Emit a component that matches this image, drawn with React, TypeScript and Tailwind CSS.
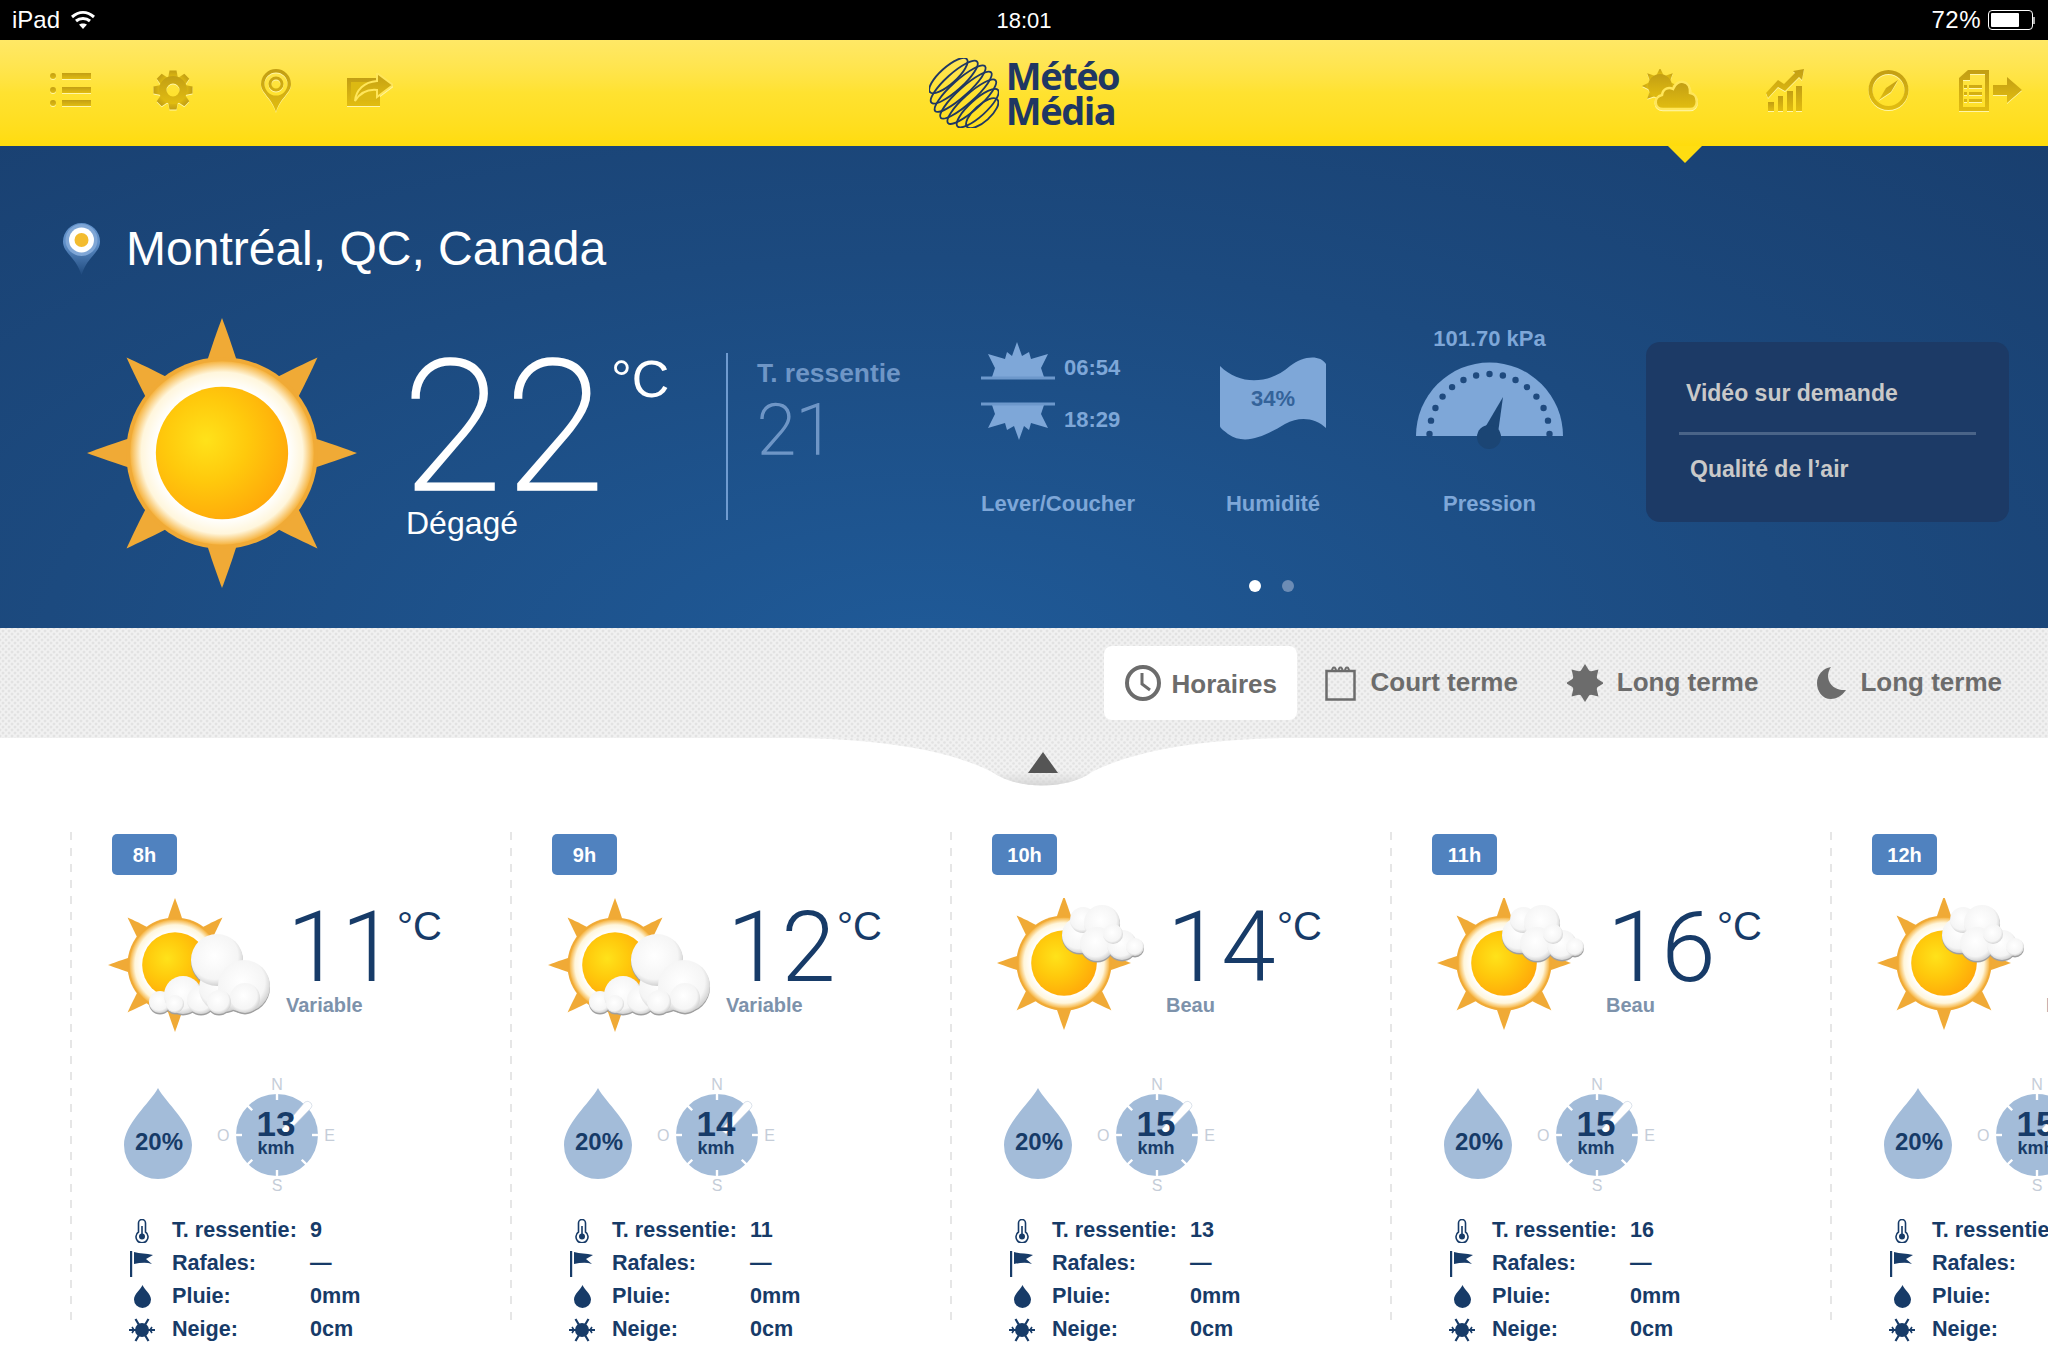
import React from "react";

function HeaderIcon({ w, h, vb, children, className = "" }: { w: number; h: number; vb: string; children: React.ReactNode; className?: string }) {
  return (
    <svg width={w} height={h} viewBox={vb} className={"drop-shadow-[0_1.5px_0_#fff6a8] " + className} fill="url(#gold)">
      {children}
    </svg>
  );
}

function SunBody({ cx, cy, scale, id }: { cx: number; cy: number; scale: number; id: string }) {
  return (
    <g transform={`translate(${cx} ${cy}) scale(${scale})`}>
      <defs>
        <radialGradient id={id + "d"} cx="38%" cy="40%" r="70%">
          <stop offset="0%" stopColor="#ffe21a" />
          <stop offset="45%" stopColor="#ffc90c" />
          <stop offset="100%" stopColor="#ffa40a" />
        </radialGradient>
        <radialGradient id={id + "r"} cx="50%" cy="50%" r="50%">
          <stop offset="72%" stopColor="#ffffff" />
          <stop offset="88%" stopColor="#fff6dc" />
          <stop offset="100%" stopColor="#f6b441" />
        </radialGradient>
      </defs>
      {[0, 45, 90, 135, 180, 225, 270, 315].map((a) => (
        <path key={a} transform={`rotate(${a})`} d="M-13 -62 C-8 -78 -3 -92 0 -100 C3 -92 8 -78 13 -62 Z" fill="#f0aa36" />
      ))}
      <circle r="71" fill="#f0aa36" />
      <circle r="68" fill={`url(#${id}r)`} />
      <circle r="49" fill={`url(#${id}d)`} />
    </g>
  );
}

function Puffs({ circles, id }: { circles: number[][]; id: string }) {
  return (
    <g>
      <defs>
        <radialGradient id={id} cx="45%" cy="42%" r="58%">
          <stop offset="0%" stopColor="#ffffff" />
          <stop offset="78%" stopColor="#f5f5f5" />
          <stop offset="100%" stopColor="#d2d2d2" />
        </radialGradient>
      </defs>
      {circles.map(([x, y, r], i) => (
        <circle key={"s" + i} cx={x} cy={y + 1.5} r={r} fill="#9f9f9f" />
      ))}
      {circles.map(([x, y, r], i) => (
        <circle key={i} cx={x} cy={y} r={r} fill={`url(#${id})`} />
      ))}
    </g>
  );
}

function WeatherIcon({ kind, id }: { kind: "variable" | "beau"; id: string }) {
  return (
    <svg width="188" height="140" viewBox="0 0 188 140" className="shrink-0">
      {kind === "variable" ? (
        <>
          <SunBody cx={68} cy={67} scale={0.67} id={id} />
          <Puffs
            id={id + "c"}
            circles={[
              [53, 104, 11],
              [76, 97, 19],
              [94, 102, 14],
              [116, 90, 24],
              [110, 62, 26],
              [137, 88, 26],
              [138, 100, 15],
              [112, 104, 12],
              [68, 106, 9],
            ]}
          />
        </>
      ) : (
        <>
          <SunBody cx={77} cy={65} scale={0.67} id={id} />
          <Puffs
            id={id + "c"}
            circles={[
              [93, 37, 18],
              [96, 22, 13],
              [115, 25, 18],
              [110, 46, 17],
              [135, 47, 15],
              [148, 49, 9],
              [126, 36, 10],
            ]}
          />
        </>
      )}
    </svg>
  );
}

function Drop() {
  return (
    <svg width="68" height="91" viewBox="0 0 68 91" className="absolute inset-0">
      <path d="M34 0C42 15 68 36 68 57A34 34 0 0 1 0 57C0 36 26 15 34 0Z" fill="#a3bcd9" />
    </svg>
  );
}

function WindDial() {
  const ticks = [0, 45, 90, 135, 180, 225, 270, 315];
  return (
    <svg width="82" height="82" viewBox="-41 -41 82 82" className="absolute inset-0">
      <circle r="41" fill="#a3bcd9" />
      {ticks.map((a) => (
        <rect key={a} x="-1.2" y="-42" width="2.4" height="7" fill="#fff" transform={`rotate(${a})`} />
      ))}
      <path d="M4 -5L28 -33Q31 -35 34 -32Q36 -29 34 -27L9 -1Z" fill="#fff" stroke="#c3cfdd" strokeWidth="0.6" />
    </svg>
  );
}

function Thermo() {
  return (
    <svg width="16" height="24" viewBox="0 0 16 24" fill="none" stroke="#173b68" strokeWidth="1.6">
      <path d="M4.5 13V4a3.5 3.5 0 0 1 7 0v9a6 6 0 1 1-7 0Z" />
      <circle cx="8" cy="17.5" r="3" fill="#173b68" stroke="none" />
      <rect x="7.2" y="7" width="1.6" height="9" fill="#173b68" stroke="none" />
    </svg>
  );
}
function FlagI() {
  return (
    <svg width="24" height="26" viewBox="0 0 24 26" fill="#173b68">
      <rect x="0" y="0" width="2.2" height="26" />
      <path d="M4 1C10 3 16 2 23 4L16 8L22 13C16 11 10 12 4 13Z" />
    </svg>
  );
}
function DropI() {
  return (
    <svg width="17" height="23" viewBox="0 0 17 23" fill="#173b68">
      <path d="M8.5 0C10 4 17 9 17 14.5A8.5 8.5 0 0 1 0 14.5C0 9 7 4 8.5 0Z" />
    </svg>
  );
}
function Snow() {
  return (
    <svg width="26" height="24" viewBox="-13 -12 26 24" stroke="#173b68" strokeWidth="2.2" fill="#173b68">
      <circle r="7" stroke="none" />
      <path d="M-13 0H13M-6.5 -11L6.5 11M6.5 -11L-6.5 11" />
      <path d="M-10 -3L-8 0L-10 3M10 -3L8 0L10 3" fill="none" strokeWidth="1.6" />
    </svg>
  );
}

const cards = [
  { h: "8h", t: "11", d: "Variable", k: "variable" as const, w: "13", f: "9" },
  { h: "9h", t: "12", d: "Variable", k: "variable" as const, w: "14", f: "11" },
  { h: "10h", t: "14", d: "Beau", k: "beau" as const, w: "15", f: "13" },
  { h: "11h", t: "16", d: "Beau", k: "beau" as const, w: "15", f: "16" },
  { h: "12h", t: "17", d: "Beau", k: "beau" as const, w: "15", f: "17" },
];

function Card({ c, i }: { c: (typeof cards)[number]; i: number }) {
  return (
    <div className="relative w-[440px] shrink-0 pt-[2px] text-[#173b68]">
      <div className="absolute -left-[1px] top-0 h-[490px] w-[2px] bg-[repeating-linear-gradient(to_bottom,#e6e6e6_0,#e6e6e6_8px,transparent_8px,transparent_16px)]" />
      <div className="ml-[41px] flex h-[41px] w-[65px] items-center justify-center rounded-[5px] bg-[#5082bf] text-[20px] font-bold text-white">{c.h}</div>
      <div className="mt-[23px] flex h-[140px] pl-[36px]">
        <WeatherIcon kind={c.k} id={"w" + i} />
        <div className="flex flex-col">
          <div className="mt-[15px] flex items-start">
            <span className="-ml-[8px] w-[110px] font-['Roboto',sans-serif] text-[98px] font-light leading-[70px]">{c.t}</span>
            <span className="-mt-[3px] text-[40px] leading-[32px]">°C</span>
          </div>
          <span className="-ml-[9px] mt-[10px] text-[20px] font-bold leading-[24px] text-[#7d92ab]">{c.d}</span>
        </div>
      </div>
      <div className="mt-[40px] flex h-[136px] pl-[53px]">
        <div className="relative mt-[10px] flex h-[91px] w-[68px] items-center justify-center">
          <Drop />
          <span className="relative ml-[2px] mt-[16px] text-[24px] font-bold">20%</span>
        </div>
        <div className="relative ml-[44px] mt-[16px] h-[82px] w-[82px]">
          <WindDial />
          <span className="absolute -top-[18px] left-0 w-full text-center text-[16px] leading-[18px] text-[#c5cdd8]">N</span>
          <span className="absolute -bottom-[19px] left-0 w-full text-center text-[16px] leading-[18px] text-[#c5cdd8]">S</span>
          <span className="absolute -left-[19px] top-[33px] text-[16px] leading-[18px] text-[#c5cdd8]">O</span>
          <span className="absolute -right-[17px] top-[33px] text-[16px] leading-[18px] text-[#c5cdd8]">E</span>
          <div className="relative flex h-full flex-col items-center pt-[14px]">
            <span className="-ml-[2px] text-[35px] font-bold leading-[32px]">{c.w}</span>
            <span className="-ml-[2px] -mt-[2px] text-[18px] font-bold leading-[20px]">kmh</span>
          </div>
        </div>
      </div>
      <div className="flex flex-col">
        {[
          [<Thermo key="a" />, "T. ressentie:", c.f],
          [<FlagI key="b" />, "Rafales:", "—"],
          [<DropI key="c" />, "Pluie:", "0mm"],
          [<Snow key="d" />, "Neige:", "0cm"],
        ].map(([icon, label, value], n) => (
          <div key={n} className="flex h-[33px] items-center pl-[51px] text-[21.6px] font-bold">
            <span className="flex w-[40px] justify-center">{icon}</span>
            <span className="ml-[10px] w-[138px] whitespace-nowrap">{label}</span>
            <span className="whitespace-nowrap">{value}</span>
          </div>
        ))}
      </div>
    </div>
  );
}

function Gauge() {
  const dots = Array.from({ length: 15 }, (_, i) => {
    const a = Math.PI - (i * Math.PI) / 14;
    return [73.5 + 60 * Math.cos(a), 73 - 60 * Math.sin(a)];
  });
  return (
    <svg width="147" height="90" viewBox="0 0 147 90">
      <path d="M0 75A73.5 73.5 0 0 1 147 75Z" fill="#7ea7d8" />
      {dots.map(([x, y], i) => (
        <circle key={i} cx={x} cy={y} r="3.2" fill="#1f4a7e" />
      ))}
      <path d="M67 70L87 36L82 72Z" fill="#1b4574" />
      <circle cx="73" cy="76" r="12" fill="#1b4574" />
    </svg>
  );
}

function Rise({ flip = false }: { flip?: boolean }) {
  return (
    <svg width="74" height="38" viewBox="0 0 74 38" fill="#7ea7d8" className={flip ? "rotate-180" : ""}>
      <path d="M36 0L41 14L48 10L50 17L67 12L60 26L63 35H11L14 26L7 12L24 17L26 10L31 14Z" />
      <rect x="0" y="34.500" width="74" height="3" fill="#6d98cb" />
    </svg>
  );
}

function TabText({ children }: { children: React.ReactNode }) {
  return <span className="text-[26px] font-bold leading-none text-[#6c6c6c]">{children}</span>;
}

export default function App() {
  return (
    <div className="relative h-[1352px] w-[2048px] overflow-hidden bg-white font-['Liberation_Sans',Arial,sans-serif]">
      <svg width="0" height="0" className="absolute">
        <defs>
          <linearGradient id="gold" x1="0" y1="0" x2="0" y2="1">
            <stop offset="0%" stopColor="#c29e14" />
            <stop offset="100%" stopColor="#e2bd10" />
          </linearGradient>
        </defs>
      </svg>

      {/* status bar */}
      <div className="grid h-[40px] grid-cols-3 items-center bg-black px-[12px] text-[24px] text-white">
        <div className="flex items-center gap-[10px]">
          <span>iPad</span>
          <svg width="26" height="20" viewBox="0 0 26 20" fill="none" stroke="#fff" strokeWidth="3">
            <path d="M2 7C9 1 17 1 24 7M6 11C10 7.500 16 7.500 20 11" />
            <path d="M13 19L9 14.500C11 13 15 13 17 14.500Z" fill="#fff" stroke="none" />
          </svg>
        </div>
        <div className="text-center text-[22px]">18:01</div>
        <div className="flex items-center justify-end gap-[7px] pr-[1px]">
          <span className="tracking-[0.5px]">72%</span>
          <div className="flex items-center">
            <div className="h-[20px] w-[45px] rounded-[4px] border border-white p-[2px]">
              <div className="h-full w-[72%] rounded-[1px] bg-white" />
            </div>
            <div className="h-[7px] w-[2px] bg-[#aaa]" />
          </div>
        </div>
      </div>

      {/* header */}
      <div className="relative grid h-[106px] grid-cols-3 items-center bg-gradient-to-b from-[#ffe866] via-[#ffe230] to-[#ffdc0c]">
        <div className="flex items-center pb-[6px] pl-[50px]">
          <HeaderIcon w={41} h={36} vb="0 0 41 36">
            <circle cx="3" cy="4" r="3" />
            <circle cx="3" cy="18" r="3" />
            <circle cx="3" cy="31" r="3" />
            <rect x="12" y="1" width="29" height="6" />
            <rect x="12" y="15" width="29" height="6" />
            <rect x="12" y="28" width="29" height="6" />
          </HeaderIcon>
          <HeaderIcon w={40} h={40} vb="-20 -20 40 40" className="ml-[62px]">
            {[0, 45, 90, 135, 180, 225, 270, 315].map((a) => (
              <path key={a} transform={`rotate(${a})`} d="M-5 -12L-3.500 -19.500H3.500L5 -12Z" />
            ))}
            <path fillRule="evenodd" d="M0 -14A14 14 0 1 1 0 14A14 14 0 1 1 0 -14ZM0 -6.500A6.500 6.500 0 1 0 0 6.500A6.500 6.500 0 1 0 0 -6.500Z" />
          </HeaderIcon>
          <HeaderIcon w={30} h={43} vb="0 0 30 43" className="ml-[68px]">
            <path fillRule="evenodd" d="M15 0A15 15 0 0 1 30 15C30 24 19 29 15 43C11 29 0 24 0 15A15 15 0 0 1 15 0ZM15 3.500A11.500 11.500 0 1 0 15 26.500A11.500 11.500 0 1 0 15 3.500ZM15 7.500A7.500 7.500 0 1 1 15 22.500A7.500 7.500 0 1 1 15 7.500ZM15 10.500A4.500 4.500 0 1 0 15 19.500A4.500 4.500 0 1 0 15 10.500Z" />
          </HeaderIcon>
          <HeaderIcon w={46} h={34} vb="0 0 46 34" className="ml-[56px]">
            <path fillRule="evenodd" d="M0 5H33V33H0ZM4 9V27H29V9Z" />
            <rect x="4" y="9" width="25" height="18" fill="#dcb912" />
            <path d="M30 0L46 12L30 24V17C20 16 13 20 8 28C9 17 17 9 30 8Z" stroke="#ffe65a" strokeWidth="2" />
          </HeaderIcon>
        </div>
        <div className="flex items-center justify-center">
          <svg width="70" height="70" viewBox="-36 -36 72 72" fill="none" stroke="#1f3763" strokeWidth="1.900">
            {[-24, -15, -6, 3, 12, 21, 28].map((d) => (
              <ellipse key={d} cx="0" cy={d} rx={Math.sqrt(1225 - d * d)} ry="8.500" transform="rotate(-42)" />
            ))}
          </svg>
          <div className="ml-[7px] flex flex-col font-['Open_Sans',sans-serif] text-[38px] font-bold leading-[35px] tracking-[-1.5px] text-[#1f3763]">
            <span>Météo</span>
            <span>Média</span>
          </div>
        </div>
        <div className="flex items-center justify-end pb-[6px] pr-[26px]">
          <HeaderIcon w={56} h={42} vb="0 0 56 42">
            <g>
              {[0, 45, 90, 135, 180, 225, 270, 315].map((a) => (
                <path key={a} transform={`translate(18 17) rotate(${a})`} d="M-3.500 -11L0 -18L3.500 -11Z" />
              ))}
              <circle cx="18" cy="17" r="12" />
            </g>
            <path d="M21 40C12 40 11 28 20 26C21 19 27 18 31 20C35 9 49 11 48 24C57 25 57 40 48 40Z" stroke="#ffe65a" strokeWidth="2.500" />
          </HeaderIcon>
          <HeaderIcon w={40} h={42} vb="0 0 40 42" className="ml-[68px]">
            <rect x="2" y="33" width="6" height="9" />
            <rect x="12" y="27" width="5" height="15" />
            <rect x="21" y="22" width="6" height="20" />
            <rect x="30" y="17" width="6" height="25" />
            <path d="M0 24L12 11L18 15L29 4L27 2L38 0L36 11L33 8L19 22L12 18L2 29Z" />
          </HeaderIcon>
          <HeaderIcon w={41} h={42} vb="0 0 41 42" className="ml-[62px]">
            <path fillRule="evenodd" d="M20.500 1A20 20 0 1 1 20.500 41A20 20 0 1 1 20.500 1ZM20.500 5A16 16 0 1 0 20.500 37A16 16 0 1 0 20.500 5Z" />
            <path d="M30 11L23 23L11 31L18 19Z" />
          </HeaderIcon>
          <HeaderIcon w={63} h={41} vb="0 0 63 41" className="ml-[50px]">
            <path fillRule="evenodd" d="M0 8L9 0H30V41H0ZM4 10V37H26V4H11V10ZM10 15H23V18H10ZM10 22H23V25H10ZM10 29H23V32H10ZM5 15H8V18H5ZM5 22H8V25H5ZM5 29H8V32H5Z" />
            <path d="M34 15H48V7L63 20L48 33V25H34Z" />
          </HeaderIcon>
        </div>
        <div className="absolute left-[1668px] top-[106px] z-10 h-0 w-0 border-x-[17px] border-t-[17px] border-x-transparent border-t-[#ffdd11]" />
      </div>

      {/* hero */}
      <div className="h-[482px] bg-[radial-gradient(ellipse_at_45%_105%,#1f5a98_0%,#1c4a7f_55%,#193f6f_100%)] text-white">
        <div className="flex h-[172px] items-start pl-[63px] pt-[77px]">
          <svg width="37" height="52" viewBox="0 0 37 52">
            <defs>
              <linearGradient id="pinT" x1="0" y1="0" x2="0" y2="1">
                <stop offset="40%" stopColor="#5f8fc8" />
                <stop offset="100%" stopColor="#1f4a7e" />
              </linearGradient>
            </defs>
            <path d="M18.500 0A18.500 18.500 0 0 1 37 18.500C37 30 24 34 18.500 52C13 34 0 30 0 18.500A18.500 18.500 0 0 1 18.500 0Z" fill="url(#pinT)" />
            <circle cx="18.500" cy="17" r="16" fill="#7fa6d6" />
            <circle cx="18.500" cy="17" r="12.500" fill="#fff" />
            <circle cx="18.500" cy="17" r="7" fill="#f3bc30" />
          </svg>
          <span className="ml-[26px] mt-[1px] text-[48px] leading-[50px]">Montréal, QC, Canada</span>
        </div>
        <div className="flex h-[272px]">
          <svg width="272" height="272" viewBox="0 0 272 272" className="ml-[86px] shrink-0">
            <SunBody cx={136} cy={135} scale={1.35} id="big" />
          </svg>
          <div className="ml-[48px] flex w-[320px] shrink-0 flex-col pt-[47px]">
            <div className="flex items-start">
              <span className="-ml-[3px] w-[208px] font-['Roboto',sans-serif] text-[180px] font-thin leading-[125px] tracking-[4px] [-webkit-text-stroke:3.5px_white]">22</span>
              <span className="-mt-[9px] text-[52px] leading-[46px]">°C</span>
            </div>
            <span className="mt-[14px] text-[32px] leading-[38px]">Dégagé</span>
          </div>
          <div className="mt-[35px] h-[167px] w-[2px] bg-[#6f9bd0]" />
          <div className="ml-[29px] flex w-[224px] shrink-0 flex-col pt-[40px] text-[#6f96c6]">
            <span className="whitespace-nowrap text-[26.4px] font-bold leading-[30px]">T. ressentie</span>
            <span className="mt-[15px] font-['Roboto',sans-serif] text-[71px] font-thin leading-[54px] [-webkit-text-stroke:1.5px_#6f96c6]">21</span>
          </div>
          <div className="flex w-[149px] shrink-0 flex-col pt-[24px] text-[#7ea7d8]">
            <div className="flex items-center">
              <Rise />
              <span className="ml-[9px] mt-[13px] text-[22px] font-bold leading-none">06:54</span>
            </div>
            <div className="mt-[22px] flex items-center">
              <Rise flip />
              <span className="ml-[9px] -mt-[3px] text-[22px] font-bold leading-none">18:29</span>
            </div>
            <span className="mt-[51px] whitespace-nowrap text-[22px] font-bold leading-[26px]">Lever/Coucher</span>
          </div>
          <div className="flex w-[286px] shrink-0 flex-col items-center pt-[38px] text-[#7ea7d8]">
            <div className="relative flex h-[84px] w-[106px] items-center justify-center">
              <svg width="106" height="84" viewBox="0 0 106 84" className="absolute inset-0">
                <path d="M0 10C20 30 50 28 70 10C82 0 100 -2 106 8V72C95 62 80 60 65 68C45 80 25 90 8 78C3 74 0 72 0 70Z" fill="#7ea7d8" />
              </svg>
              <span className="relative text-[22px] font-bold text-[#34639a]">34%</span>
            </div>
            <span className="mt-[51px] text-[22px] font-bold leading-[26px]">Humidité</span>
          </div>
          <div className="flex w-[147px] shrink-0 flex-col items-center pt-[8px] text-[#7ea7d8]">
            <span className="whitespace-nowrap text-[22px] font-bold leading-[26px]">101.70 kPa</span>
            <div className="mt-[9px]">
              <Gauge />
            </div>
            <span className="mt-[40px] text-[22px] font-bold leading-[26px]">Pression</span>
          </div>
          <div className="ml-[83px] mt-[24px] flex h-[180px] w-[363px] shrink-0 flex-col rounded-[14px] bg-[#1c3a66] px-[33px] pt-[36px] text-[23px] font-bold text-[#c9c9c9]">
            <span className="ml-[7px] leading-[30px]">Vidéo sur demande</span>
            <div className="mt-[24px] h-[3px] bg-[#4a6488]" />
            <span className="ml-[11px] mt-[19px] leading-[30px]">Qualité de l’air</span>
          </div>
        </div>
        <div className="ml-[1249px] -mt-[10px] flex gap-[21px]">
          <div className="h-[12px] w-[12px] rounded-full bg-white" />
          <div className="h-[12px] w-[12px] rounded-full bg-[#6c8cb5]" />
        </div>
      </div>

      {/* tabs */}
      <div className="flex h-[110px] items-start justify-end bg-[#f1f1f1] bg-[radial-gradient(#e2e2e2_1.2px,transparent_1.7px),radial-gradient(#e2e2e2_1.2px,transparent_1.7px)] bg-[length:6px_6px] bg-[position:0_0,3px_3px] pr-[46px] pt-[18px]">
        <div className="flex h-[74px] w-[193px] items-center rounded-[8px] bg-white pl-[21px]">
          <svg width="36" height="36" viewBox="0 0 36 36" fill="none" stroke="#6c6c6c" strokeWidth="4">
            <circle cx="18" cy="18" r="16" />
            <path d="M17 8V19L25 25" strokeWidth="3" />
          </svg>
          <span className="ml-[10px] mt-[4px]"><TabText>Horaires</TabText></span>
        </div>
        <div className="flex h-[74px] items-center pl-[28px]">
          <svg width="31" height="36" viewBox="0 0 31 36" fill="none" stroke="#6c6c6c" strokeWidth="2.500">
            <rect x="1.500" y="6" width="28" height="28.500" />
            <path d="M7 7C7 1 11 1 11 7M13.500 7C13.500 1 17.500 1 17.500 7M20 7C20 1 24 1 24 7" strokeWidth="2" />
          </svg>
          <span className="ml-[14px]"><TabText>Court terme</TabText></span>
        </div>
        <div className="flex h-[74px] items-center pl-[49px]">
          <svg width="36" height="38" viewBox="-18 -19 36 38" fill="#6c6c6c">
            {[0, 45, 90, 135, 180, 225, 270, 315].map((a) => (
              <path key={a} transform={`rotate(${a})`} d="M-5 -11L0 -19L5 -11Z" />
            ))}
            <circle r="13" />
          </svg>
          <span className="ml-[14px]"><TabText>Long terme</TabText></span>
        </div>
        <div className="flex h-[74px] items-center pl-[59px]">
          <svg width="29" height="32" viewBox="0 0 29 32" fill="#6c6c6c">
            <path d="M14 0C7 10 13 24 29 23C25 29 19 32 14 32C5 32 0 24 0 16C0 8 6 1 14 0Z" />
          </svg>
          <span className="ml-[14px]"><TabText>Long terme</TabText></span>
        </div>
      </div>

      {/* notch over the cards */}
      <svg width="480" height="50" viewBox="0 0 480 50" className="absolute left-[802px] top-[738px]">
        <defs>
          <pattern id="dots" width="6" height="6" patternUnits="userSpaceOnUse">
            <rect width="6" height="6" fill="#f1f1f1" />
            <circle cx="1.500" cy="1.500" r="1.300" fill="#e2e2e2" />
            <circle cx="4.500" cy="4.500" r="1.300" fill="#e2e2e2" />
          </pattern>
          <linearGradient id="notchFade" x1="0" y1="0" x2="0" y2="1">
            <stop offset="70%" stopColor="#d8d8d8" stopOpacity="0" />
            <stop offset="100%" stopColor="#d0d0d0" stopOpacity="0.8" />
          </linearGradient>
        </defs>
        <path d="M0 0C90 2 150 14 190 34C215 52 265 52 290 34C330 14 390 2 480 0Z" fill="url(#dots)" />
        <path d="M0 0C90 2 150 14 190 34C215 52 265 52 290 34C330 14 390 2 480 0Z" fill="url(#notchFade)" />
        <path d="M226 35L241 14L256 35Z" fill="#555" />
      </svg>

      {/* cards */}
      <div className="flex pl-[71px] pt-[94px]">
        {cards.map((c, i) => (
          <Card key={c.h} c={c} i={i} />
        ))}
      </div>
    </div>
  );
}
